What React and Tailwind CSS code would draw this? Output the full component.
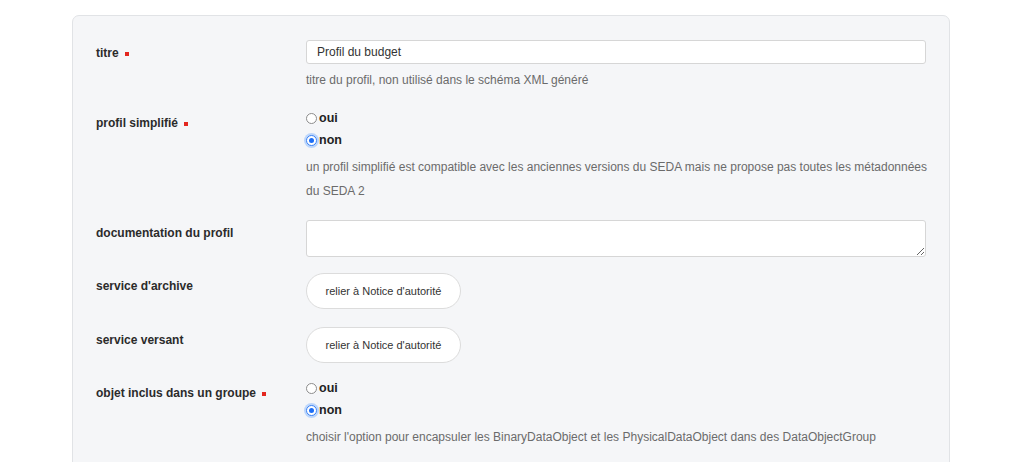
import React from 'react';

const font = { fontFamily: '"Liberation Sans", Arial, Helvetica, sans-serif' };

function Required() {
  return <span className="ml-[6px] inline-block h-[4px] w-[4px] bg-[#e3261f] align-middle" />;
}

function Label({ children, required }) {
  return (
    <div className="pt-[5px] text-[12px] font-bold leading-[16px] text-[#2b2b2b]">
      {children}
      {required && <Required />}
    </div>
  );
}

function Help({ children, className = '' }) {
  return <p className={`text-[12px] leading-[24px] text-[#6b6b6b] ${className}`}>{children}</p>;
}

function Radio({ checked, label }) {
  return (
    <label className="flex h-[16px] items-center gap-[2px] text-[12.5px] font-bold text-[#222]">
      {checked ? (
        <span className="flex h-[11px] w-[11px] items-center justify-center rounded-full border border-[#3b82f6] bg-white ring-2 ring-[#bcd6fb]">
          <span className="h-[5px] w-[5px] rounded-full bg-[#1d6ef5]" />
        </span>
      ) : (
        <span className="h-[11px] w-[11px] rounded-full border border-[#8c8c8c] bg-white" />
      )}
      <span>{label}</span>
    </label>
  );
}

function RadioGroup({ value }) {
  return (
    <div className="flex flex-col gap-[6px]">
      <Radio label="oui" checked={value === 'oui'} />
      <Radio label="non" checked={value === 'non'} />
    </div>
  );
}

function LinkButton() {
  return (
    <button className="h-[36px] w-[155px] rounded-full border border-[#dcdcdc] bg-white text-[11px] text-[#333]">
      relier à Notice d'autorité
    </button>
  );
}

function Row({ label, required, className = '', children }) {
  return (
    <div className={`grid grid-cols-[210px_1fr] ${className}`}>
      <Label required={required}>{label}</Label>
      <div>{children}</div>
    </div>
  );
}

export default function App() {
  return (
    <div className="h-[462px] overflow-hidden bg-white pt-[15px]" style={font}>
      <div className="ml-[72px] w-[878px] rounded-t-[7px] border border-[#e1e3e6] bg-[#f5f6f8] px-[23px] pt-[24px] pb-10">
        <Row label="titre" required>
          <input
            className="block h-[24px] w-full rounded-[3px] border border-[#d6d6d6] bg-white px-[10px] text-[12px] text-[#333] outline-none"
            defaultValue="Profil du budget"
          />
          <Help className="mt-[4px]">titre du profil, non utilisé dans le schéma XML généré</Help>
        </Row>

        <Row label="profil simplifié" required className="mt-[18px]">
          <RadioGroup value="non" />
          <Help className="mt-[7px]">
            <span className="whitespace-nowrap">
              un profil simplifié est compatible avec les anciennes versions du SEDA mais ne propose pas toutes les métadonnées
            </span>
            <br />
            du SEDA 2
          </Help>
        </Row>

        <Row label="documentation du profil" className="mt-[17px]">
          <textarea className="block h-[37px] w-full rounded-[3px] border border-[#d6d6d6] bg-white px-[10px] text-[12px] outline-none" />
        </Row>

        <Row label="service d'archive" className="mt-[16px]">
          <LinkButton />
        </Row>

        <Row label="service versant" className="mt-[18px]">
          <LinkButton />
        </Row>

        <Row label="objet inclus dans un groupe" required className="mt-[17px]">
          <RadioGroup value="non" />
          <Help className="mt-[7px]">
            choisir l'option pour encapsuler les BinaryDataObject et les PhysicalDataObject dans des DataObjectGroup
          </Help>
        </Row>
      </div>
    </div>
  );
}
